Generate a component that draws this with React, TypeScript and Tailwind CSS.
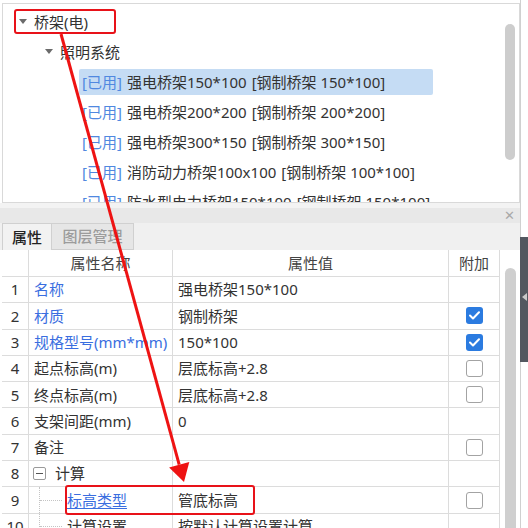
import * as React from "react"

const FONT = { fontFamily: '"Noto Sans", "Noto Sans CJK SC", sans-serif' }

const treeItems = [
  { name: "强电桥架150*100", spec: "[钢制桥架 150*100]", selected: true },
  { name: "强电桥架200*200", spec: "[钢制桥架 200*200]" },
  { name: "强电桥架300*150", spec: "[钢制桥架 300*150]" },
  { name: "消防动力桥架100x100", spec: "[钢制桥架 100*100]" },
  { name: "防水型电力桥架150*100", spec: "[钢制桥架 150*100]" },
]

type Row = {
  no: number
  name: string
  value?: string
  blue?: boolean
  check?: "on" | "off"
  kind?: "group" | "child"
  underline?: boolean
}

const rows: Row[] = [
  { no: 1, name: "名称", value: "强电桥架150*100", blue: true },
  { no: 2, name: "材质", value: "钢制桥架", blue: true, check: "on" },
  { no: 3, name: "规格型号(mm*mm)", value: "150*100", blue: true, check: "on" },
  { no: 4, name: "起点标高(m)", value: "层底标高+2.8", check: "off" },
  { no: 5, name: "终点标高(m)", value: "层底标高+2.8", check: "off" },
  { no: 6, name: "支架间距(mm)", value: "0" },
  { no: 7, name: "备注", value: "", check: "off" },
  { no: 8, name: "计算", kind: "group" },
  { no: 9, name: "标高类型", value: "管底标高", blue: true, underline: true, kind: "child", check: "off" },
  { no: 10, name: "计算设置", value: "按默认计算设置计算", kind: "child" },
]

function Caret() {
  return (
    <svg width="8" height="6" viewBox="0 0 8 6" className="shrink-0">
      <polygon points="0,0 8,0 4,5" fill="#6b6b6b" />
    </svg>
  )
}

function Checkbox({ on }: { on: boolean }) {
  if (on) {
    return (
      <div className="w-[17px] h-[17px] rounded-[3px] bg-[#2b7be0] flex items-center justify-center">
        <svg width="11" height="9" viewBox="0 0 11 9">
          <path d="M1 4.5 L4 7.5 L10 1.2" stroke="white" strokeWidth="2" fill="none" strokeLinecap="round" strokeLinejoin="round" />
        </svg>
      </div>
    )
  }
  return <div className="w-[17px] h-[17px] rounded-[3px] border-[1.5px] border-[#a3a3a3] bg-white" />
}

function TreePanel() {
  return (
    <div className="shrink-0 ml-[2px] mt-[3px] w-[518px] h-[200px] border border-[#d9d9d9] bg-white flex overflow-hidden">
      <div className="flex-1 min-w-0 pt-[3px] text-[15px] text-[#333]">
        <div className="h-[30px] flex items-center gap-[7px] pl-[16px]">
          <Caret />
          <span>桥架(电)</span>
        </div>
        <div className="h-[30px] flex items-center gap-[7px] pl-[42px]">
          <Caret />
          <span>照明系统</span>
        </div>
        {treeItems.map((it) => (
          <div key={it.name} className="h-[30px] flex items-center pl-[76px]">
            <div
              className={
                "h-[26px] flex items-center pl-[3px] whitespace-nowrap rounded-[2px] " +
                (it.selected ? "bg-[#c5dcf4] w-[354px]" : "")
              }
            >
              <span className="text-[#5088e0]">[已用]</span>
              <span className="ml-[5px]">{it.name}</span>
              <span className="ml-[5px]">{it.spec}</span>
            </div>
          </div>
        ))}
      </div>
      <div className="w-[17px] shrink-0 pt-[20px] pr-[4px] flex justify-end">
        <div className="w-[10px] h-[136px] rounded-full bg-[#cdcdcd]" />
      </div>
    </div>
  )
}

function PropTable() {
  return (
    <div className="flex flex-1 min-h-0 overflow-hidden">
      <div className="ml-[2px] w-[498px] shrink-0 text-[15px] text-[#333] bg-white">
        <div className="flex h-[27px] border-b border-[#dcdcdc] text-[#444]">
          <div className="w-[27px] border-r border-[#dcdcdc]" />
          <div className="w-[144px] border-r border-[#dcdcdc] flex items-center justify-center">属性名称</div>
          <div className="w-[276px] border-r border-[#dcdcdc] flex items-center justify-center">属性值</div>
          <div className="w-[51px] border-r border-[#dcdcdc] flex items-center justify-center">附加</div>
        </div>
        {rows.map((r) => (
          <div key={r.no} className="flex h-[26.3px] border-b border-[#dcdcdc]">
            <div className="w-[27px] border-r border-[#dcdcdc] flex items-center justify-center">{r.no}</div>
            <div className="w-[144px] border-r border-[#dcdcdc] flex items-center whitespace-nowrap">
              {r.kind === "group" && (
                <div className="flex items-center pl-[4px]">
                  <div className="w-[13px] h-[13px] border border-[#9a9a9a] rounded-[2px] flex items-center justify-center">
                    <div className="w-[7px] h-px bg-[#555]" />
                  </div>
                  <span className="ml-[9px]">{r.name}</span>
                </div>
              )}
              {r.kind === "child" && (
                <div className="flex items-center h-full">
                  <div className="ml-[10px] h-full border-l border-dotted border-[#c4c4c4]" />
                  <div className="w-[22px] border-t border-dotted border-[#c4c4c4]" />
                  <span className={"ml-[5px] " + (r.blue ? "text-[#3a6ee0] " : "") + (r.underline ? "underline underline-offset-2" : "")}>
                    {r.name}
                  </span>
                </div>
              )}
              {!r.kind && <span className={"pl-[5px] " + (r.blue ? "text-[#3a6ee0]" : "")}>{r.name}</span>}
            </div>
            <div className="w-[276px] border-r border-[#dcdcdc] flex items-center pl-[5px] whitespace-nowrap">{r.value}</div>
            <div className="w-[51px] border-r border-[#dcdcdc] flex items-center justify-center">
              {r.check && <Checkbox on={r.check === "on"} />}
            </div>
          </div>
        ))}
      </div>
      <div className="w-[17px] shrink-0 bg-white flex justify-center pt-[18px] pl-[4px]">
        <div className="w-[11px] h-[300px] rounded-t-full bg-[#cfcfcf]" />
      </div>
    </div>
  )
}

export default function App() {
  return (
    <div className="relative w-[528px] h-[528px] overflow-hidden bg-white flex" style={FONT}>
      {/* main column */}
      <div className="w-[520px] h-full flex flex-col">
        <TreePanel />
        <div className="h-[5px] shrink-0 bg-[#f3f3f3]" />
        {/* panel title bar */}
        <div className="h-[15px] shrink-0 bg-[#e8e8e8] flex items-center justify-end pr-[5px]">
          <span className="text-[13px] leading-none text-[#a8a8a8]">✕</span>
        </div>
        {/* tabs */}
        <div className="h-[27px] shrink-0 bg-[#f0f0f0] flex items-end pl-[2px] text-[15px]">
          <div className="h-[27px] w-[50px] flex items-center justify-center border border-[#d0d0d0] border-b-0 bg-[#f2f2f2] text-[#222] font-medium">
            属性
          </div>
          <div className="h-[27px] w-[82px] flex items-center justify-center border border-[#d0d0d0] border-l-0 bg-[#e6e6e6] text-[#9c9c9c] font-medium">
            图层管理
          </div>
        </div>
        <PropTable />
      </div>
      {/* right edge strip */}
      <div className="w-[8px] h-full flex flex-col">
        <div className="h-[237px] shrink-0 bg-white border-l border-[#d0d0d0]" />
        <div className="h-[125px] shrink-0 bg-[#535860] flex flex-col items-center pt-[56px]">
          <svg width="5" height="8" viewBox="0 0 5 8">
            <polygon points="5,0 5,8 0,4" fill="#c8c8c8" />
          </svg>
        </div>
        <div className="flex-1 bg-white border-l border-[#d0d0d0]" />
      </div>

      {/* red annotations */}
      <div className="absolute left-[14px] top-[9px] w-[102px] h-[25px] border-2 border-[#e81219] rounded-[3px] pointer-events-none" />
      <div className="absolute left-[65px] top-[485px] w-[190px] h-[30px] border-2 border-[#e81219] rounded-[3px] pointer-events-none" />
      <svg className="absolute inset-0 pointer-events-none" width="528" height="528" viewBox="0 0 528 528">
        <line x1="61" y1="34" x2="179.2" y2="464.6" stroke="#ee1313" strokeWidth="3" />
        <polygon points="184,482 189.3,462 169.1,467.4" fill="#ee1313" />
      </svg>
    </div>
  )
}
